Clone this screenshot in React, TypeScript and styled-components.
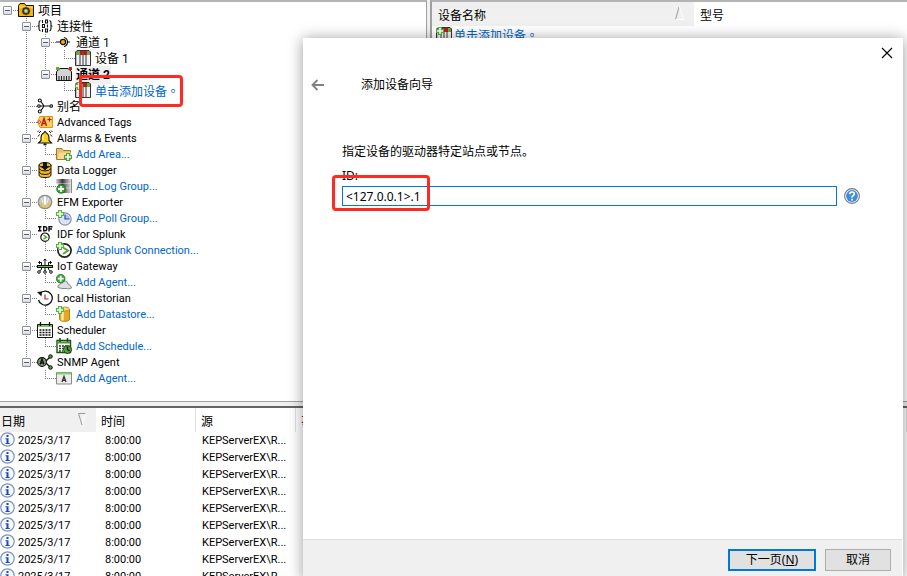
import React, { useState } from "react";
import styled, { createGlobalStyle, css } from "styled-components";

const GlobalStyle = createGlobalStyle`
  *, *::before, *::after { box-sizing: border-box; }
  html, body, #root { height: 100%; }
  body {
    margin: 0;
    overflow: hidden;
    background: #f0f0f0;
    color: #000;
    font-family: Roboto, "Noto Sans CJK SC", sans-serif;
    font-size: 12px;
  }
  button, input { font: inherit; color: inherit; }
`;

/* ---------- icons ---------- */

const Icon = styled.svg.attrs({ viewBox: "0 0 16 16", "aria-hidden": true })<{ $size?: number }>`
  display: block;
  flex: none;
  width: ${(p) => p.$size ?? 16}px;
  height: ${(p) => p.$size ?? 16}px;
`;

const Plus = ({ x = 0, y = 0, fill = "#55b53f" }) => (
  <g transform={`translate(${x} ${y})`}>
    <path d="M2 0h4v2h2v4H6v2H2V6H0V2h2z" fill={fill} />
    <path d="M4 1v6M1 4h6" stroke="#fff" strokeWidth="1.6" />
  </g>
);

const RoundPlus = ({ cx, cy }: { cx: number; cy: number }) => (
  <g>
    <circle cx={cx} cy={cy} r="4.3" fill="#3aa835" stroke="#14701a" strokeWidth=".8" />
    <path d={`M${cx} ${cy - 3}v6M${cx - 3} ${cy}h6`} stroke="#fff" strokeWidth="1.8" />
  </g>
);

const DeviceShape = () => (
  <g>
    <path d="M.5 15.5V2L2 .5h12L15.5 2v13.5z" fill="#8a8a8a" stroke="#333" />
    <path d="M1.500 5h3v10h-3zM5.500 5h2v10h-2zM8.500 5h2v10h-2zM11.500 5H15v10h-3.500z" fill="#f2f2f2" />
    <path d="M4 1h8v4H4z" fill="#c81414" />
    <path d="M3 1h2v4H3zM12 1h2v4h-2z" fill="#63b52d" />
    <path d="M5 5v10M8 1v14M11 5v10" stroke="#555" strokeWidth=".8" />
  </g>
);

const glyphs: Record<string, React.ReactNode> = {
  project: (
    <>
      <path d="M.5 14.5V3.500L2 1.500h4.500l1.500 2h7.500v11z" fill="#f7b500" stroke="#111" />
      <path d="M1 5h14" stroke="#ffe27a" />
      <circle cx="8" cy="9" r="3" fill="#999" stroke="#333" strokeWidth="1.5" />
      <path d="M8 4.800v2M8 11.200v2M3.800 9h2M10.200 9h2M5 6l1.400 1.400M9.600 10.600L11 12M11 6L9.600 7.400M6.400 10.600L5 12" stroke="#333" strokeWidth="1.2" />
      <circle cx="8" cy="9" r="1.2" fill="#ffd23c" />
    </>
  ),
  connectivity: (
    <g fill="none" stroke="#111" strokeWidth="1.1">
      <path d="M3.500 2.500Q2 3 2 5v5.500q0 2 1.500 2.500M12.500 2.500Q14 3 14 5v5.500q0 2-1.500 2.500M.5 8H2M14 8h1.500" />
      <path d="M5.500 2v3M5.500 11v3M10.500 6.500v3" />
      <path d="M8.500 2h2v3h-2zM5.500 6.500h2v3h-2zM8.500 11h2v3h-2z" />
    </g>
  ),
  channel: (
    <g stroke="#111" strokeWidth="1.2">
      <path d="M0 8h5M11.500 8H14" fill="none" />
      <circle cx="7" cy="8" r="2.600" fill="#f6b100" />
      <path d="M8 3.500q3.500.8 3.500 4.500T8 12.500" fill="none" />
    </g>
  ),
  device: <DeviceShape />,
  addDevice: (
    <>
      <DeviceShape />
      <Plus />
    </>
  ),
  ethernet: (
    <>
      <path d="M.5 14.500v-9L4 2.500h8l3.500 3v9z" fill="#d4d4d4" stroke="#111" />
      <path d="M3 14.500V10M5.500 14.500V10M8 14.500V10M10.500 14.500V10M13 14.500V10" stroke="#222" />
      <path d="M0 1h3v3H0z" fill="#54b526" />
      <path d="M13 1h3v3h-3z" fill="#d02020" />
    </>
  ),
  alias: (
    <g fill="#fff" stroke="#111" strokeWidth="1.1">
      <path d="M4 3.500L7 8h6M4 12.500L7 8H3" fill="none" />
      <circle cx="2.800" cy="2.500" r="1.500" />
      <circle cx="1.900" cy="8" r="1.300" />
      <circle cx="2.800" cy="13.500" r="1.500" />
      <circle cx="14.200" cy="8" r="1.300" />
    </g>
  ),
  tags: (
    <>
      <path d="M.5 8L3 2.500h12.500v11H3z" fill="#fbcf5b" stroke="#d99a1c" />
      <path d="M4.500 12L7 4.500 9.500 12M5.500 9.500h3" fill="none" stroke="#c11313" strokeWidth="1.400" />
      <path d="M12.500 3.500v4M10.500 5.500h4" stroke="#c11313" strokeWidth="1.100" />
      <circle cx="2.200" cy="8" r="1.300" fill="#fff" stroke="#c11313" strokeWidth=".8" />
    </>
  ),
  alarm: (
    <>
      <path d="M8 1.500q1 0 1 1.200Q12 4 12 8v2.500l2.500 2.500h-13L4 10.500V8q0-4 3-5.300Q7 1.500 8 1.500z" fill="#f9cf1f" stroke="#111" strokeWidth="1.100" />
      <path d="M6 5.500v5" stroke="#fff6b0" strokeWidth="1.300" />
      <path d="M6.500 13.500h3v1.800h-3z" fill="#111" />
      <path d="M4 1L2 3M2 .5L.5 2M2.500 4.500l-1.500 2M12 1l2 2M14 .5L15.500 2M13.500 4.500l1.500 2" stroke="#111" fill="none" />
    </>
  ),
  addFolder: (
    <>
      <path d="M.5 13.500V2.500H6l1.500 2h7v9z" fill="#e6c06a" stroke="#a07a2a" />
      <path d="M1.500 13L3 6.500h12l-1 6.500z" fill="#f6dc94" />
      <Plus x={8} y={7} fill="#4aa33a" />
    </>
  ),
  database: (
    <>
      <path d="M2 3v10q0 2.500 6 2.500t6-2.500V3" fill="#f7bc14" stroke="#111" />
      <path d="M2 6.500Q3.500 9 8 9t6-2.500M2 10q1.500 2.500 6 2.500t6-2.500" fill="none" stroke="#111" />
      <ellipse cx="8" cy="3" rx="6" ry="2.500" fill="#f7bc14" stroke="#111" />
      <path d="M6 0h4v4h2.500L8 8.500 3.500 4H6z" fill="#111" />
    </>
  ),
  addLog: (
    <>
      <defs>
        <linearGradient id="log-fade" x1="0" x2="1" y1="0" y2="0">
          <stop offset="0" stopColor="#d8d8d8" />
          <stop offset=".4" stopColor="#3a3a3a" />
          <stop offset=".65" stopColor="#8a8a8a" />
          <stop offset="1" stopColor="#f0f0f0" />
        </linearGradient>
      </defs>
      <path d="M0 1h16v14H0z" fill="url(#log-fade)" />
      <path d="M0 5.500h16M0 10h16" stroke="#fff" strokeOpacity=".4" />
      <path d="M15.500 1v14" stroke="#888" />
      <path d="M0 6h2v9H0z" fill="#fff" />
      <RoundPlus cx={5} cy={11} />
    </>
  ),
  gauge: (
    <>
      <circle cx="8" cy="8" r="6.700" fill="#c9c9c9" stroke="#8a8a8a" strokeWidth="1.300" />
      <path d="M8 2.500v8" stroke="#fff" strokeWidth="2.200" />
      <path d="M4.500 8.500v4M11.500 8.500v4M8 11v3" stroke="#eec21a" strokeWidth="1.800" />
      <path d="M4.500 4l1.500 5M11.500 4L10 9" stroke="#eee" />
    </>
  ),
  addPoll: (
    <>
      <circle cx="9" cy="9" r="6.200" fill="#dbe4f7" stroke="#8a8fa6" strokeWidth="1.200" />
      <path d="M9 9V4.500q4.500 0 4.500 4.500z" fill="#a9bdf0" />
      <path d="M9 4.500V9h4.500" fill="none" stroke="#2a47b5" strokeWidth="1.200" />
      <Plus />
    </>
  ),
  idf: (
    <>
      <g fill="none" stroke="#111" strokeWidth="1.400">
        <path d="M1 .7h3.500M1 4.800h3.500M2.700.7v4M6.700 0v5.500M6 .7h2q1.800 0 1.800 2t-1.800 2H6M12 5.500V.7h3.500M12 3h3" />
      </g>
      <circle cx="8" cy="11.200" r="4.200" fill="#fff" stroke="#111" strokeWidth="1.200" />
      <path d="M6.500 9.200l3 2-3 2" fill="none" stroke="#56a832" strokeWidth="1.500" />
    </>
  ),
  addSplunk: (
    <>
      <circle cx="8.500" cy="8.500" r="6.600" fill="#fff" stroke="#222" strokeWidth="1.700" />
      <path d="M7 5.500l5 3-5 3.500" fill="none" stroke="#56a832" strokeWidth="2" />
      <Plus />
    </>
  ),
  iot: (
    <>
      <path d="M0 7h16v3H0z" fill="#111" />
      <path d="M1 8.500h14" stroke="#6cc04a" />
      <g fill="none" stroke="#111">
        <path d="M8 7V1M6.500 2.500L8 1l1.500 1.500M4.500 7V4.500H2M11.500 7V4.500H14M3 3L1.500 4.500 3 6M13 3l1.500 1.500L13 6M8 10v3M4.500 10v1.500L2.500 13M11.500 10v1.500l2 1.500" />
      </g>
      <g fill="#fff" stroke="#111">
        <circle cx="2" cy="14" r="1.300" />
        <circle cx="8" cy="14" r="1.300" />
        <circle cx="14" cy="14" r="1.300" />
      </g>
    </>
  ),
  addCloud: (
    <>
      <path d="M2 13.500q-1-2.500 2-3Q6 6 9.500 7q2.500.5 2.500 3 3 1 3.500 4-3 1.500-5 .5-5 .5-8.500-1z" fill="#dedfe6" stroke="#85858f" />
      <RoundPlus cx={4.700} cy={4.700} />
    </>
  ),
  historian: (
    <>
      <path d="M3 3.500A7 7 0 1 1 1.500 10" fill="none" stroke="#111" strokeWidth="1.300" />
      <path d="M0 2l5-.5-.5 5z" fill="#111" />
      <path d="M8 4.500V9h3.500" fill="none" stroke="#a3263b" strokeWidth="1.200" />
    </>
  ),
  addStore: (
    <>
      <path d="M3.500 3v10q0 2.300 5 2.300t5-2.300V3" fill="#e5a823" stroke="#b5820f" />
      <path d="M6.500 5v9.500" stroke="#ffe9a0" strokeWidth="2.500" />
      <ellipse cx="8.500" cy="3" rx="5" ry="2" fill="#f8d880" stroke="#b5820f" strokeWidth=".8" />
      <Plus />
    </>
  ),
  calendar: (
    <>
      <path d="M.5 2.500h15v13H.5z" fill="#fff" stroke="#111" />
      <path d="M1 4h14" stroke="#7fc45a" strokeWidth="2" />
      <path d="M3.500 0v4M12.500 0v4" stroke="#111" strokeWidth="1.300" />
      <path d="M2.500 8h11M2.500 10.500h11M2.500 13h11" stroke="#111" strokeWidth="1.500" strokeDasharray="2 1" />
    </>
  ),
  addSchedule: (
    <>
      <path d="M1 2.500h13.500v12H1z" fill="#fff" stroke="#1d4d16" strokeWidth="1.400" />
      <path d="M1.500 4.500h12.500" stroke="#4b9a38" strokeWidth="2" />
      <path d="M4 0v4M11.500 0v4" stroke="#1d4d16" strokeWidth="1.500" />
      <path d="M3 8h9M3 10.500h5M3 13h4" stroke="#1d4d16" strokeWidth="1.500" strokeDasharray="2 1" />
      <circle cx="11.500" cy="11.500" r="4" fill="#4fa62f" stroke="#1d3d16" />
      <path d="M11.500 8.500v3l2 1.500" fill="none" stroke="#111" strokeWidth="1.300" />
    </>
  ),
  snmp: (
    <>
      <path d="M9 7l4-4M9 9l4 4" stroke="#111" strokeWidth="1.300" />
      <circle cx="5" cy="8" r="4.400" fill="#83a07e" stroke="#111" strokeWidth="1.100" />
      <path d="M3 10.500L5 5l2 5.500M3.800 9h2.500" fill="none" stroke="#111" strokeWidth="1.300" />
      <circle cx="13.500" cy="2.500" r="1.800" fill="#4a9a3c" stroke="#111" />
      <circle cx="13.500" cy="13.500" r="1.800" fill="#4a9a3c" stroke="#111" />
    </>
  ),
  addAgent: (
    <>
      <path d="M.5 2.500h15v11.500H.5z" fill="#ececec" stroke="#8a8a8a" />
      <path d="M1 3.500h14" stroke="#8ccf6a" strokeWidth="2" />
      <path d="M6 12l2-5.500 2 5.500M6.700 10.300h2.600" fill="none" stroke="#333" strokeWidth="1.300" />
    </>
  ),
  info: (
    <>
      <circle cx="7.500" cy="7.500" r="6.700" fill="#f6f9fd" stroke="#7d95bd" strokeWidth="1.200" />
      <path d="M6.500 3h2v2h-2zM5.500 6.300h3V11h1.200v1H5.500v-1h1V7.300h-1z" fill="#1c49b4" />
    </>
  ),
  help: (
    <>
      <circle cx="8" cy="8" r="7.400" fill="#fff" stroke="#777" strokeWidth="1.100" />
      <circle cx="8" cy="8" r="5.900" fill="#3c8ddc" />
      <path d="M5.700 6.300q0-2.300 2.300-2.300t2.300 2q0 1.200-1.300 1.800T8 9.600" fill="none" stroke="#fff" strokeWidth="1.600" />
      <path d="M7.200 10.800h1.700v1.700H7.200z" fill="#fff" />
    </>
  ),
  back: <path d="M14 8H2.500M7.500 3L2.500 8l5 5" fill="none" stroke="#808080" strokeWidth="1.800" />,
  close: <path d="M3 3l10 10M13 3L3 13" stroke="#000" strokeWidth="1.100" />,
  sortUp: (
    <>
      <path d="M3.500 13.500L7 1" fill="none" stroke="#9a9a9a" />
      <path d="M7.500 1l4 12.500h-8" fill="none" stroke="#fff" />
    </>
  ),
  sortDown: (
    <>
      <path d="M11.500 1.500L8 13" fill="none" stroke="#fff" />
      <path d="M11.500 1.500h-7L8 13" fill="none" stroke="#9a9a9a" />
    </>
  ),
};

const Glyph = ({ name, size }: { name: string; size?: number }) => <Icon $size={size}>{glyphs[name]}</Icon>;

/* ---------- window frame ---------- */

const Window = styled.main`
  position: relative;
  display: flex;
  flex-direction: column;
  height: 100%;
  overflow: hidden;
`;

const Workspace = styled.div`
  flex: 1;
  min-height: 0;
  display: flex;
  gap: 3px;
  border-bottom: 1px solid #a0a0a0;
`;

const Pane = styled.section`
  background: #fff;
  border-top: 2px solid #b4b4b4;
  overflow: hidden;
`;

const TreePane = styled(Pane)`
  flex: 0 0 427px;
  border-right: 1px solid #a0a0a0;
`;

const DevicePane = styled(Pane)`
  flex: 1;
  border-left: 2px solid #a0a0a0;
`;

const LogPane = styled.section`
  flex: 0 0 170px;
  margin-top: 4px;
  border-top: 2px solid #646464;
  background: #fff;
  overflow: hidden;
`;

/* ---------- tree ---------- */

const Tree = styled.ul`
  margin: 0 0 0 -1px;
  padding: 0;
  list-style: none;
`;

const TreeRow = styled.li`
  position: relative;
  display: flex;
  align-items: flex-start;
  height: 16px;
`;

type Line = "blank" | "through" | "tee" | "elbow" | "root";

const dotsDown = "repeating-linear-gradient(to bottom, #808080 0 1px, transparent 1px 2px)";
const dotsAcross = "repeating-linear-gradient(to right, #808080 0 1px, transparent 1px 2px)";

const lineBackground: Record<Line, string> = {
  blank: "none",
  through: `${dotsDown} 8px 0 / 1px 16px no-repeat`,
  tee: `${dotsDown} 8px 0 / 1px 16px no-repeat, ${dotsAcross} 8px 8px / 11px 1px no-repeat`,
  elbow: `${dotsDown} 8px 0 / 1px 8px no-repeat, ${dotsAcross} 8px 8px / 11px 1px no-repeat`,
  root: `${dotsAcross} 8px 8px / 11px 1px no-repeat`,
};

const Guide = styled.span<{ $line: Line }>`
  flex: none;
  display: flex;
  align-items: center;
  width: 19px;
  height: 16px;
  padding-left: 4px;
  background: ${(p) => lineBackground[p.$line]};
`;

const Expander = styled.button`
  width: 9px;
  height: 9px;
  padding: 0;
  border: 1px solid #919191;
  border-radius: 1px;
  background: linear-gradient(#3e5fae, #3e5fae) center / 5px 1px no-repeat, linear-gradient(#fff, #dcdcdc);
`;

const labelBox = css<{ $cjk?: boolean }>`
  margin-left: 3px;
  padding: 0 1px;
  font-size: ${(p) => (p.$cjk ? 12 : 11)}px;
  line-height: 18px;
  white-space: nowrap;
`;

const NodeLabel = styled.span<{ $cjk?: boolean; $active?: boolean }>`
  ${labelBox}
  ${(p) => p.$active && "font-weight: 700; background: #f0f0f0;"}
`;

const NodeLink = styled.a<{ $cjk?: boolean }>`
  ${labelBox}
  color: #0066cc;
  text-decoration: none;
`;

/* Full stop centred in its em square. */
const FullStop = styled.span`
  font-family: "Noto Sans CJK TC", sans-serif;
`;

const Marker = styled.div`
  position: absolute;
  border: 3px solid #ff2a20;
  border-radius: 4px;
  pointer-events: none;
  z-index: 1;
`;

const NodeMarker = styled(Marker)`
  left: 80px;
  top: -7px;
  width: 104px;
  height: 32px;
`;

const FieldMarker = styled(Marker)`
  left: -10px;
  top: -11px;
  width: 98px;
  height: 36px;
`;

type Node = {
  label: string;
  icon: string;
  lines: string;
  open?: boolean;
  link?: boolean;
  active?: boolean;
  marked?: boolean;
};

const lineCodes: Record<string, Line> = { ".": "blank", "|": "through", t: "tee", l: "elbow", r: "root" };

const nodes: Node[] = [
  { label: "项目", icon: "project", lines: "r", open: true },
  { label: "连接性", icon: "connectivity", lines: ".t", open: true },
  { label: "通道 1", icon: "channel", lines: ".|t", open: true },
  { label: "设备 1", icon: "device", lines: ".||l" },
  { label: "通道 2", icon: "ethernet", lines: ".|l", open: true, active: true },
  { label: "单击添加设备。", icon: "addDevice", lines: ".|.l", link: true, marked: true },
  { label: "别名", icon: "alias", lines: ".t" },
  { label: "Advanced Tags", icon: "tags", lines: ".t" },
  { label: "Alarms & Events", icon: "alarm", lines: ".t", open: true },
  { label: "Add Area...", icon: "addFolder", lines: ".|l", link: true },
  { label: "Data Logger", icon: "database", lines: ".t", open: true },
  { label: "Add Log Group...", icon: "addLog", lines: ".|l", link: true },
  { label: "EFM Exporter", icon: "gauge", lines: ".t", open: true },
  { label: "Add Poll Group...", icon: "addPoll", lines: ".|l", link: true },
  { label: "IDF for Splunk", icon: "idf", lines: ".t", open: true },
  { label: "Add Splunk Connection...", icon: "addSplunk", lines: ".|l", link: true },
  { label: "IoT Gateway", icon: "iot", lines: ".t", open: true },
  { label: "Add Agent...", icon: "addCloud", lines: ".|l", link: true },
  { label: "Local Historian", icon: "historian", lines: ".t", open: true },
  { label: "Add Datastore...", icon: "addStore", lines: ".|l", link: true },
  { label: "Scheduler", icon: "calendar", lines: ".t", open: true },
  { label: "Add Schedule...", icon: "addSchedule", lines: ".|l", link: true },
  { label: "SNMP Agent", icon: "snmp", lines: ".l", open: true },
  { label: "Add Agent...", icon: "addAgent", lines: "..l", link: true },
];

const isCjk = (text: string) => /[\u3400-\u9fff]/.test(text);

const LinkText = ({ text }: { text: string }) =>
  text.endsWith("。") ? (
    <>
      {text.slice(0, -1)}
      <FullStop>。</FullStop>
    </>
  ) : (
    <>{text}</>
  );

const TreeNode = ({ node }: { node: Node }) => {
  const cells = node.lines.split("");
  return (
    <TreeRow>
      {cells.map((code, i) => (
        <Guide key={i} $line={lineCodes[code]}>
          {node.open && i === cells.length - 1 && <Expander aria-label={`折叠 ${node.label}`} />}
        </Guide>
      ))}
      <Glyph name={node.icon} />
      {node.link ? (
        <NodeLink href="#" $cjk={isCjk(node.label)}>
          <LinkText text={node.label} />
        </NodeLink>
      ) : (
        <NodeLabel $cjk={isCjk(node.label)} $active={node.active}>
          {node.label}
        </NodeLabel>
      )}
      {node.marked && <NodeMarker />}
    </TreeRow>
  );
};

/* ---------- lists ---------- */

const List = styled.table`
  width: 100%;
  table-layout: fixed;
  border-collapse: separate;
  border-spacing: 0;
`;

const Column = styled.col<{ $width?: number }>`
  width: ${(p) => (p.$width ? `${p.$width}px` : "auto")};
`;

const HeadCell = styled.th<{ $sorted?: boolean }>`
  height: 24px;
  padding: 0 6px;
  font-weight: 400;
  text-align: left;
  white-space: nowrap;
  background: ${(p) => (p.$sorted ? "#f0f0f0" : "#fff")};
`;

const LogHeadCell = styled(HeadCell)`
  padding: 0 5px;
  border-right: 1px solid ${(p) => (p.$sorted ? "#f0f0f0" : "#e0e0e0")};
  &:first-child { padding-left: 1px; }
`;

const HeadContent = styled.span`
  display: flex;
  align-items: center;
  justify-content: space-between;
`;

const LogCell = styled.td`
  height: 17px;
  padding: 0 0 0 6px;
  font-size: 11px;
  line-height: 17px;
  white-space: nowrap;
  overflow: hidden;

  &:first-child { padding-left: 0; }
  &:nth-child(2) { padding-left: 9px; }
`;

const DeviceCell = styled.td`
  height: 18px;
  padding: 0 4px;
`;

const IconText = styled.span`
  display: flex;
  align-items: flex-start;
  gap: 2px;
`;

const CellLink = styled.a`
  color: #0066cc;
  line-height: 16px;
  text-decoration: none;
`;

/* ---------- wizard ---------- */

const Dialog = styled.div`
  position: absolute;
  top: 38px;
  right: 4px;
  bottom: -4px;
  left: 303px;
  display: flex;
  flex-direction: column;
  background: #fff;
  border-right: 1px solid #fff;
  box-shadow: 0 1px 14px rgba(0, 0, 0, 0.4);
  font-family: "Noto Sans", "Noto Sans CJK SC", sans-serif;
`;

const PlainButton = styled.button`
  display: flex;
  align-items: center;
  justify-content: center;
  width: 30px;
  height: 30px;
  padding: 0;
  border: 0;
  background: none;
`;

const TitleBar = styled.header`
  display: flex;
  justify-content: flex-end;
`;

const WizardHeading = styled.div`
  display: flex;
  align-items: center;
  gap: 28px;
  height: 33px;
`;

const Title = styled.h1`
  margin: 0;
  font-size: 12px;
  font-weight: 400;
  line-height: 16px;
`;

const Body = styled.form`
  flex: 1;
  display: flex;
  flex-direction: column;
  padding: 43px 42px 0 39px;
`;

const Prompt = styled.p`
  margin: 0;
  line-height: 16px;
`;

const FieldLabel = styled.label`
  margin: 8px 0 2px;
  line-height: 16px;
`;

const FieldRow = styled.div`
  position: relative;
  display: flex;
  align-items: center;
  gap: 7px;
`;

const TextInput = styled.input`
  flex: 1;
  min-width: 0;
  height: 20px;
  padding: 0 3px;
  border: 1px solid #0078d7;
  border-radius: 0;
  outline: 0;
  background: #fff;
`;

const HelpButton = styled(PlainButton)`
  width: 16px;
  height: 20px;
`;

const Footer = styled.footer`
  display: flex;
  justify-content: flex-end;
  gap: 9px;
  padding: 9px 11px;
  background: #f0f0f0;
  border-top: 1px solid #dfdfdf;
`;

const PushButton = styled.button<{ $primary?: boolean }>`
  width: ${(p) => (p.$primary ? 88 : 66)}px;
  height: 22px;
  padding: 0;
  border: ${(p) => (p.$primary ? "2px solid #0078d7" : "1px solid #adadad")};
  background: #e1e1e1;
  line-height: 16px;
`;

const logRows = Array.from({ length: 9 }, () => ({
  date: "2025/3/17",
  time: "8:00:00",
  source: "KEPServerEX\\R...",
}));

export default function App() {
  const [deviceId, setDeviceId] = useState("<127.0.0.1>.1");

  return (
    <>
      <GlobalStyle />
      <Window>
        <Workspace>
          <TreePane>
            <Tree>
              {nodes.map((node, i) => (
                <TreeNode key={i} node={node} />
              ))}
            </Tree>
          </TreePane>
          <DevicePane>
            <List>
              <colgroup>
                <Column $width={262} />
                <Column />
              </colgroup>
              <thead>
                <tr>
                  <HeadCell $sorted>
                    <HeadContent>
                      设备名称
                      <Glyph name="sortUp" />
                    </HeadContent>
                  </HeadCell>
                  <HeadCell>型号</HeadCell>
                </tr>
              </thead>
              <tbody>
                <tr>
                  <DeviceCell>
                    <IconText>
                      <Glyph name="addDevice" />
                      <CellLink href="#">
                        <LinkText text="单击添加设备。" />
                      </CellLink>
                    </IconText>
                  </DeviceCell>
                  <DeviceCell />
                </tr>
              </tbody>
            </List>
          </DevicePane>
        </Workspace>

        <LogPane>
          <List>
            <colgroup>
              <Column $width={96} />
              <Column $width={100} />
              <Column $width={100} />
              <Column />
            </colgroup>
            <thead>
              <tr>
                <LogHeadCell $sorted>
                  <HeadContent>
                    日期
                    <Glyph name="sortDown" />
                  </HeadContent>
                </LogHeadCell>
                <LogHeadCell>时间</LogHeadCell>
                <LogHeadCell>源</LogHeadCell>
                <LogHeadCell>事件</LogHeadCell>
              </tr>
            </thead>
            <tbody>
              {logRows.map((row, i) => (
                <tr key={i}>
                  <LogCell>
                    <IconText>
                      <Glyph name="info" />
                      {row.date}
                    </IconText>
                  </LogCell>
                  <LogCell>{row.time}</LogCell>
                  <LogCell>{row.source}</LogCell>
                  <LogCell />
                </tr>
              ))}
            </tbody>
          </List>
        </LogPane>

        <Dialog role="dialog" aria-labelledby="wizard-title">
          <TitleBar>
            <PlainButton aria-label="关闭">
              <Glyph name="close" />
            </PlainButton>
          </TitleBar>
          <WizardHeading>
            <PlainButton aria-label="返回">
              <Glyph name="back" />
            </PlainButton>
            <Title id="wizard-title">添加设备向导</Title>
          </WizardHeading>
          <Body onSubmit={(e) => e.preventDefault()}>
            <Prompt>指定设备的驱动器特定站点或节点。</Prompt>
            <FieldLabel htmlFor="device-id">ID:</FieldLabel>
            <FieldRow>
              <TextInput id="device-id" value={deviceId} onChange={(e) => setDeviceId(e.target.value)} />
              <HelpButton type="button" aria-label="帮助">
                <Glyph name="help" />
              </HelpButton>
              <FieldMarker />
            </FieldRow>
          </Body>
          <Footer>
            <PushButton $primary>
              下一页(<u>N</u>)
            </PushButton>
            <PushButton>取消</PushButton>
          </Footer>
        </Dialog>
      </Window>
    </>
  );
}
